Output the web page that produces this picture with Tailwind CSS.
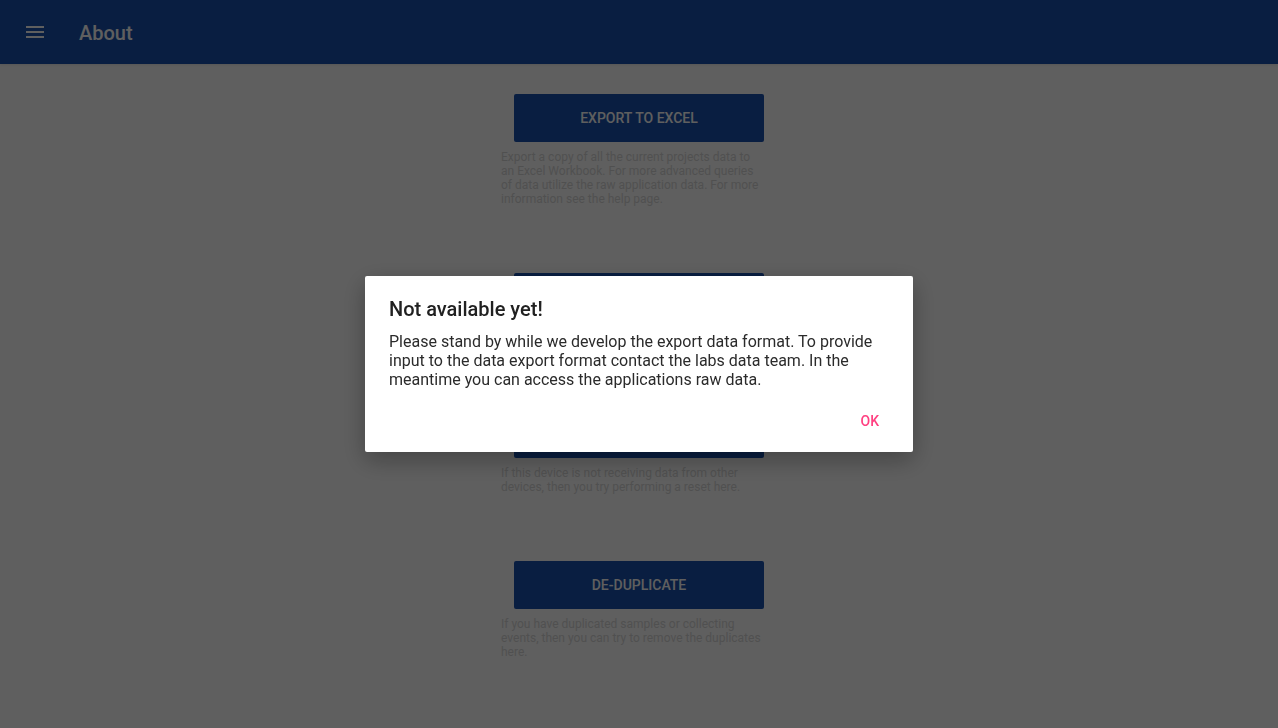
<!DOCTYPE html>
<html lang="en">
<head>
<meta charset="utf-8">
<meta name="viewport" content="width=device-width, initial-scale=1">
<title>About</title>
<script src="https://cdn.jsdelivr.net/npm/@tailwindcss/browser@4"></script>
</head>
<body class="min-h-screen bg-[#fafafa] font-['Roboto',sans-serif] text-[#212121]">
<div class="flex min-h-screen flex-col">
  <header class="flex h-16 items-center bg-[#1850ab] px-[23px] text-[#fafafa] shadow-[0_1px_3px_rgba(0,0,0,0.1)]">
    <button type="button" aria-label="Open menu" class="flex size-6 items-center justify-center">
      <svg class="size-6" viewBox="0 0 24 24" fill="currentColor" aria-hidden="true"><path d="M3 18h18v-2H3v2zm0-5h18v-2H3v2zm0-7v2h18V6H3z"/></svg>
    </button>
    <h1 class="ml-8 pt-0.5 text-xl font-medium">About</h1>
  </header>
  <main class="mx-auto flex w-[276px] max-w-full flex-col gap-[67px] pt-[30px]">
    <section class="flex flex-col gap-2">
      <button type="button" class="mx-auto h-12 w-[250px] rounded-xs bg-[#1850ab] text-sm font-medium text-[#fafafa] uppercase">Export to Excel</button>
      <p class="pr-[11px] text-xs leading-[14px] text-[#d3d3d3]">Export a copy of all the current projects data to an Excel Workbook. For more advanced queries of data utilize the raw application data. For more information see the help page.</p>
    </section>
    <section class="flex flex-col gap-2">
      <button type="button" class="mx-auto h-12 w-[250px] rounded-xs bg-[#1850ab] text-sm font-medium text-[#fafafa] uppercase" aria-label="Export raw data"></button>
      <div class="h-[14px]"></div>
    </section>
    <section class="flex flex-col gap-2">
      <button type="button" class="mx-auto h-12 w-[250px] rounded-xs bg-[#1850ab] text-sm font-medium text-[#fafafa] uppercase" aria-label="Reset"></button>
      <p class="pr-[11px] text-xs leading-[14px] text-[#d3d3d3]">If this device is not receiving data from other devices, then you try performing a reset here.</p>
    </section>
    <section class="flex flex-col gap-2">
      <button type="button" class="mx-auto h-12 w-[250px] rounded-xs bg-[#1850ab] text-sm font-medium text-[#fafafa] uppercase">De-duplicate</button>
      <p class="pr-[11px] text-xs leading-[14px] text-[#d3d3d3]">If you have duplicated samples or collecting events, then you can try to remove the duplicates here.</p>
    </section>
  </main>
</div>
<div class="fixed inset-0 flex items-center justify-center bg-black/62">
  <div role="dialog" aria-modal="true" aria-labelledby="dialog-title" class="w-[548px] max-w-full rounded-xs bg-white px-6 pt-5 pb-3 shadow-[0_8px_24px_rgba(0,0,0,0.3)]">
    <h2 id="dialog-title" class="text-xl leading-[26px] font-medium">Not available yet!</h2>
    <p class="mt-2.5 text-base leading-[19px] text-[#2b2b2b]">Please stand by while we develop the export data format. To provide input to the data export format contact the labs data team. In the meantime you can access the applications raw data.</p>
    <div class="mt-[13px] flex justify-end">
      <button type="button" class="h-[38px] px-2.5 text-sm font-medium text-[#ff4081]">OK</button>
    </div>
  </div>
</div>
</body>
</html>
